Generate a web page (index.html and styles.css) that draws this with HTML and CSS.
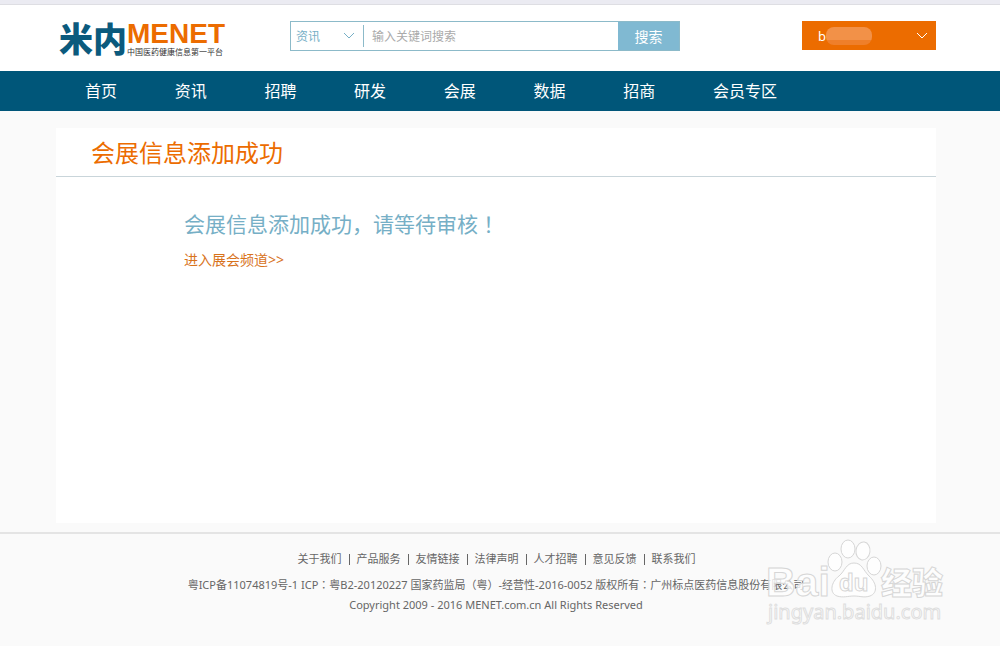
FILE: index.html
```html
<!DOCTYPE html>
<html lang="zh-CN">
<head>
<meta charset="utf-8">
<title>会展信息添加成功</title>
<link rel="stylesheet" href="styles.css">
</head>
<body>
<header class="header">
  <div class="container header-row">
    <a class="logo" href="#" aria-label="米内 MENET">
      <span class="logo-mark">米内</span>
      <span class="logo-side">
        <span class="logo-name">MENET</span>
        <span class="logo-tagline">中国医药健康信息第一平台</span>
      </span>
    </a>
    <form class="search">
      <span class="select-wrap">
        <select class="search-type" aria-label="类型"><option>资讯</option></select>
        <svg class="chevron" viewBox="0 0 12 8" aria-hidden="true"><path d="M1 1 L6 6 L11 1"/></svg>
      </span>
      <input class="search-input" type="text" placeholder="输入关键词搜索" aria-label="关键词">
      <button class="search-button" type="button">搜索</button>
    </form>
    <button class="user" type="button">
      <span class="user-name">b<span class="user-mask"></span></span>
      <svg class="chevron user-chevron" viewBox="0 0 12 8" aria-hidden="true"><path d="M1 1 L6 6 L11 1"/></svg>
    </button>
  </div>
</header>
<nav class="nav">
  <div class="container">
    <div class="nav-list">
      <a href="#">首页</a><a href="#">资讯</a><a href="#">招聘</a><a href="#">研发</a><a href="#">会展</a><a href="#">数据</a><a href="#">招商</a><a href="#">会员专区</a>
    </div>
  </div>
</nav>
<main class="main">
  <section class="container card">
    <h1 class="card-title">会展信息添加成功</h1>
    <div class="card-body">
      <p class="message">会展信息添加成功，请等待审核<span class="mark" lang="zh-TW">！</span></p>
      <a class="channel-link" href="#">进入展会频道&gt;&gt;</a>
    </div>
  </section>
</main>
<footer class="footer">
  <div class="footer-links">
    <a href="#">关于我们</a><a href="#">产品服务</a><a href="#">友情链接</a><a href="#">法律声明</a><a href="#">人才招聘</a><a href="#">意见反馈</a><a href="#">联系我们</a>
  </div>
  <p class="footer-record">粤ICP备11074819号-1 ICP<span class="mark" lang="zh-TW">：</span>粤B2-20120227 国家药监局<span class="mark" lang="zh-TW">（</span>粤<span class="mark" lang="zh-TW">）</span>-经营性-2016-0052 版权所有<span class="mark" lang="zh-TW">：</span>广州标点医药信息股份有限公司</p>
  <p class="footer-copy">Copyright 2009 - 2016 MENET.com.cn All Rights Reserved</p>
  <svg class="watermark" viewBox="0 0 190 96" role="img" aria-label="Baidu 经验">
    <g class="watermark-shape">
      <text class="wm-brand" x="4" y="61">Bai</text>
      <ellipse cx="73" cy="27" rx="7" ry="9"/>
      <ellipse cx="86" cy="14" rx="7" ry="9"/>
      <ellipse cx="101" cy="16" rx="7" ry="9" transform="rotate(8 101 16)"/>
      <ellipse cx="112" cy="31" rx="7" ry="9"/>
      <path d="M92 28 C84 28 83 36 77 41 C69 47 67 58 75 61 C81 63 86 61 92 61 C98 61 102 63 108 61 C116 58 115 48 107 41 C101 35 100 28 92 28 Z"/>
      <text class="wm-du" x="77" y="56">du</text>
      <text class="wm-cjk" x="119" y="59">经验</text>
      <text class="wm-url" x="6" y="84">jingyan.baidu.com</text>
    </g>
  </svg>
</footer>
</body>
</html>
```

FILE: styles.css
```css
* { box-sizing: border-box; }

body {
  margin: 0;
  min-height: 100vh;
  display: flex;
  flex-direction: column;
  background: #fafafa;
  color: #666;
  font-family: "Noto Sans", "Noto Sans CJK SC", sans-serif;
  font-size: 14px;
}

a { color: inherit; text-decoration: none; }
p, h1 { margin: 0; font-weight: 400; }
button, input, select { font: inherit; margin: 0; }

.header, .nav, .main, .footer { padding-right: 8px; }

.container {
  width: 100%;
  max-width: 880px;
  margin: 0 auto;
}

/* Centred full-width punctuation */
.mark { font-family: "Noto Sans CJK TC", sans-serif; }

.header {
  background: #fff;
  border-top: 4px solid #ebebf2;
  box-shadow: inset 0 1px #dedee3;
}

.header-row {
  display: flex;
  align-items: flex-start;
  height: 67px;
  padding-top: 17px;
}

.logo {
  display: flex;
  width: 234px;
  padding-left: 3px;
}

.logo-mark {
  color: #0b5a7d;
  font-family: "Noto Sans CJK SC", sans-serif;
  font-size: 34px;
  font-weight: 900;
  line-height: 34px;
}

.logo-side { display: flex; flex-direction: column; }

.logo-name {
  color: #ec6c00;
  font-family: "Liberation Sans", Arial, sans-serif;
  font-size: 28px;
  font-weight: 700;
  line-height: 26px;
}

.logo-tagline {
  color: #333;
  font-size: 8px;
  line-height: 9px;
  white-space: nowrap;
}

.search {
  display: flex;
  flex: 0 1 390px;
  height: 30px;
  border: 1px solid #8cbac9;
}

.select-wrap {
  display: flex;
  align-items: center;
  width: 73px;
  margin: 3px 0;
  border-right: 1px solid #8cbac9;
}

.search-type {
  appearance: none;
  flex: 1;
  min-width: 0;
  padding: 0 0 0 5px;
  border: 0;
  background: none;
  color: #76afc6;
  font-size: 12px;
}

.chevron {
  width: 12px;
  height: 8px;
  margin-right: 8px;
  fill: none;
  stroke: #76afc6;
}

.search-input {
  flex: 1;
  min-width: 0;
  padding: 0 8px;
  border: 0;
  background: none;
  font-size: 12px;
}

.search-input::placeholder { color: #aaa; }

.search-button {
  width: 61px;
  padding: 0;
  border: 0;
  background: #80b9d2;
  color: #fff;
  font-size: 14px;
}

.user {
  display: flex;
  align-items: center;
  justify-content: space-between;
  width: 134px;
  height: 29px;
  margin-left: auto;
  padding: 0 0 0 16px;
  border: 0;
  background: #ec6c00;
  color: #fff;
  font-size: 13px;
}

.user-name { display: flex; align-items: center; }

.user-mask {
  width: 46px;
  height: 18px;
  border-radius: 8px;
  background: linear-gradient(#f29148 70%, #ef7f2a 70%);
}

.user-chevron { stroke: #fff; }

.nav {
  background: #005679;
  color: #fff;
}

.nav-list {
  display: flex;
  justify-content: space-between;
  max-width: 721px;
  padding-left: 29px;
  font-size: 16px;
  line-height: 40px;
}

.main { flex: 1; padding-top: 17px; padding-bottom: 9px; display: flex; }

.card { background: #fff; }

.card-title {
  padding: 2px 35px 0;
  border-bottom: 1px solid #c9d5da;
  color: #ec6c00;
  font-size: 24px;
  line-height: 46px;
}

.card-body { padding: 31px 128px; }

.message {
  color: #76afc6;
  font-size: 21px;
  line-height: 30px;
}

.channel-link {
  display: inline-block;
  margin-top: 10px;
  color: #d8731c;
  line-height: 22px;
}

.footer {
  position: relative;
  padding-top: 15px;
  padding-bottom: 31px;
  border-top: 2px solid #e4e4e4;
  font-size: 11px;
  line-height: 20px;
  text-align: center;
}

.footer-links { display: flex; justify-content: center; padding-bottom: 5px; }

.footer-links a { padding: 0 7px 0 8px; }

.footer-links a + a {
  background: linear-gradient(#666, #666) left center / 1px 11px no-repeat;
}

.watermark {
  position: absolute;
  right: 48px;
  bottom: 15px;
  width: 190px;
  height: 96px;
}

.watermark-shape {
  fill: #fff;
  fill-opacity: 0.8;
  stroke: #d6d6d6;
  stroke-width: 1px;
}

.wm-brand, .wm-du {
  font-family: "Liberation Sans", Arial, sans-serif;
  font-weight: 700;
}

.wm-brand { font-size: 41px; }
.wm-du { font-size: 24px; }

.wm-cjk {
  font-family: "Noto Sans CJK SC", sans-serif;
  font-size: 31px;
  font-weight: 900;
}

.wm-url {
  font-size: 20px;
  stroke: #dedede;
}
```
